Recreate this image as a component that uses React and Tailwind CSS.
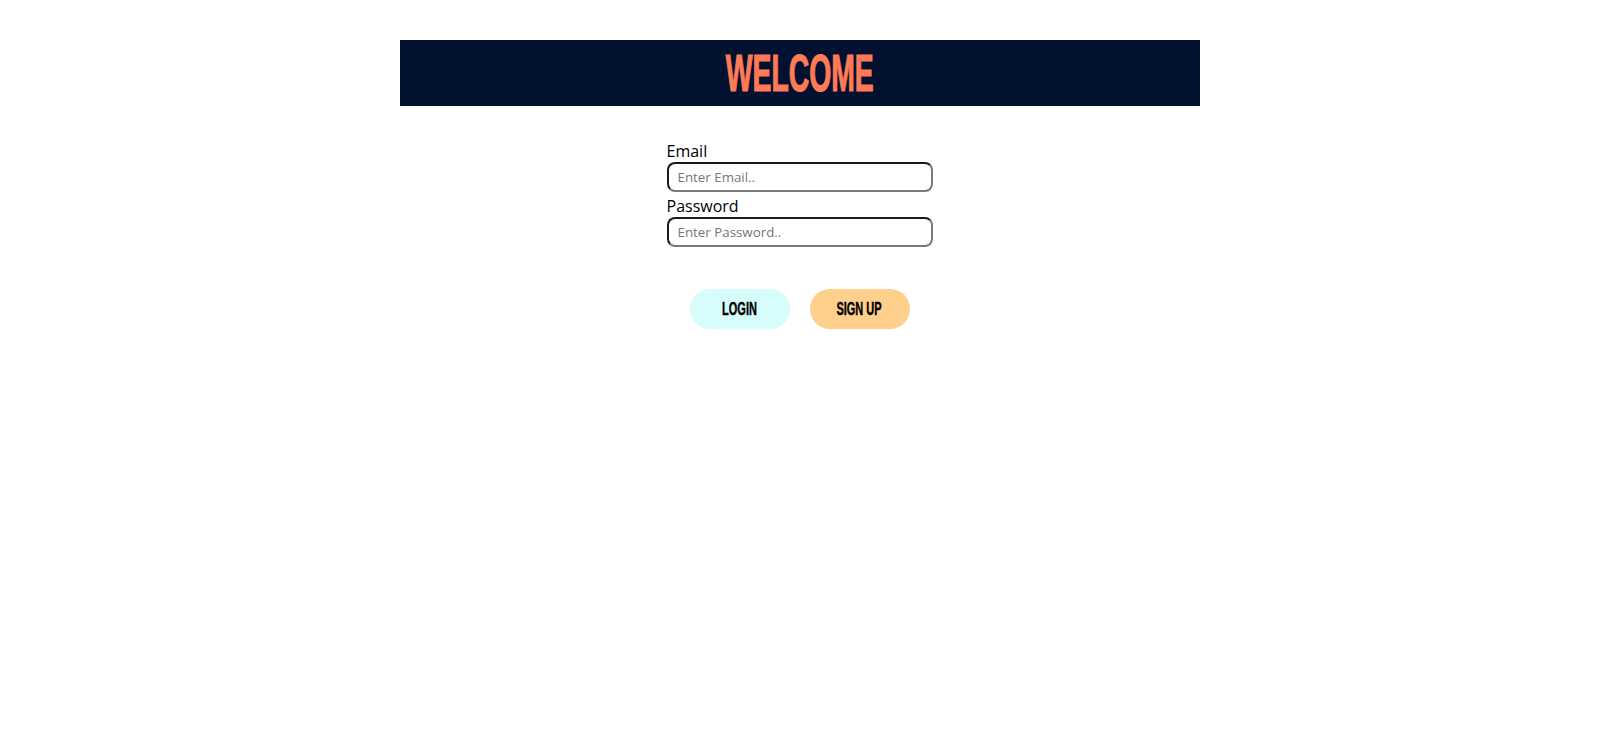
import React from 'react';

// condensed display text (Bebas-like) approximated with a squeezed bold sans
function Condensed({ children, className }) {
  return (
    <span className={'inline-block font-["Liberation_Sans",Arial,sans-serif] font-bold ' + className}>
      {children}
    </span>
  );
}

function Field({ label, type, placeholder }) {
  return (
    <div className="flex flex-col">
      <label className="text-[16px] leading-[22px] text-black">{label}</label>
      <input
        type={type}
        placeholder={placeholder}
        className="h-[30px] w-full rounded-[8px] border-2 border-t-[#1a1a1a] border-l-[#1a1a1a] border-b-[#7a7a7a] border-r-[#7a7a7a] bg-white px-[9px] text-[13.33px] text-black outline-none placeholder:text-[#767676]"
      />
    </div>
  );
}

export default function App() {
  return (
    <div className="min-h-[751px] w-full bg-white font-['Open_Sans',sans-serif]">
      <div className="pt-10">
        <div className="mx-auto flex h-[66px] w-[800px] items-center justify-center bg-[#021130]">
          <Condensed className="origin-center scale-x-[0.545] text-[52px] leading-none text-[#ff7b57] [-webkit-text-stroke:1.2px_#ff7b57]">
            WELCOME
          </Condensed>
        </div>
      </div>

      <div className="mx-auto mt-[34px] flex w-[266px] flex-col gap-[3px]">
        <Field label="Email" type="email" placeholder="Enter Email.." />
        <Field label="Password" type="password" placeholder="Enter Password.." />
      </div>

      <div className="mt-[42px] flex justify-center gap-[20px]">
        <button className="flex h-[40px] w-[100px] items-center justify-center rounded-full bg-[#d6fdfb]">
          <Condensed className="scale-x-[0.61] text-[18px] leading-none text-black [-webkit-text-stroke:0.4px_#000]">LOGIN</Condensed>
        </button>
        <button className="flex h-[40px] w-[100px] items-center justify-center rounded-full bg-[#ffcf8c]">
          <Condensed className="scale-x-[0.61] whitespace-nowrap text-[18px] leading-none text-black [-webkit-text-stroke:0.4px_#000]">SIGN UP</Condensed>
        </button>
      </div>
    </div>
  );
}
